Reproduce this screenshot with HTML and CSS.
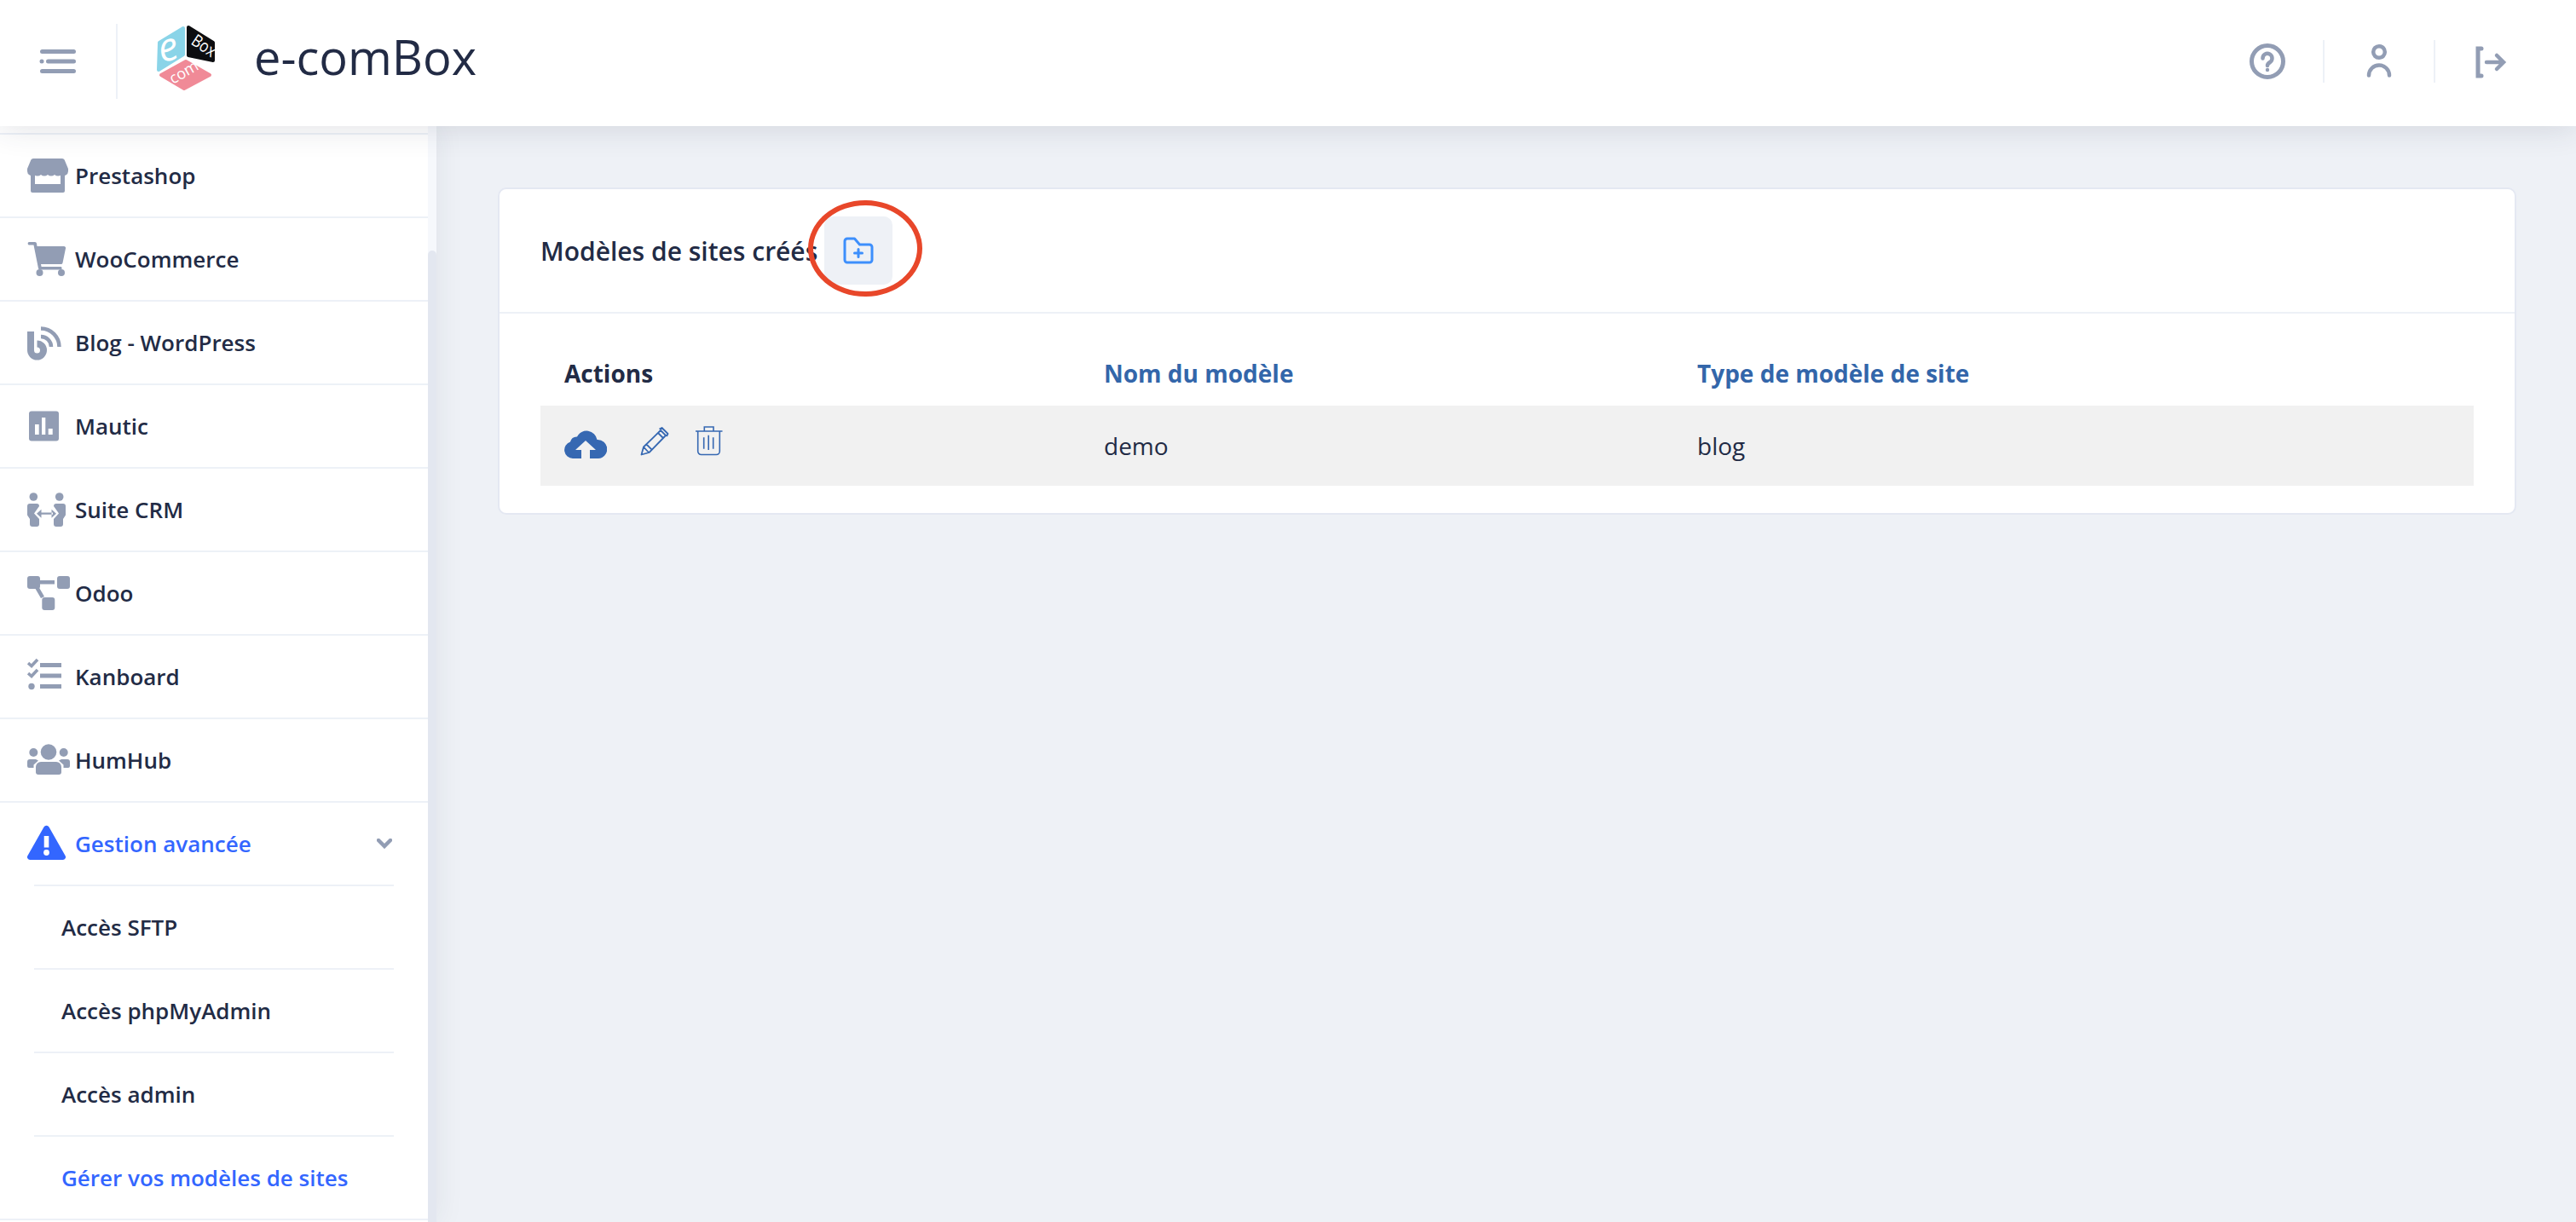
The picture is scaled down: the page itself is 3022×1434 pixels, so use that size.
FILE: index.html
```html
<!DOCTYPE html>
<html lang="fr">
<head>
    <meta charset="UTF-8">
    <meta name="viewport" content="width=device-width, initial-scale=1.0">
    <title>e-comBox</title>
    <link rel="stylesheet" href="styles.css">
</head>
<body>
    <header class="topbar">
        <div class="topbar-left">
            <button class="menu-toggle" aria-label="Menu">
                <svg width="44" height="30" viewBox="0 0 44 30"><path d="M3.5 3.5h37M10.500 15h30M3.500 26.500h37" class="line"/><circle cx="3" cy="15" r="2.500" class="dot"/></svg>
            </button>
            <div class="brand">
                <svg class="brand-logo" width="76" height="84" viewBox="0 0 76 84">
                    <path d="M35 7 7 24 6 56 35 38Z" fill="#8ad4e8" stroke="#8ad4e8" stroke-width="4" stroke-linejoin="round"/>
                    <path d="M41 6 70 24 70 45 41 39Z" fill="#0c0d10" stroke="#0c0d10" stroke-width="4" stroke-linejoin="round"/>
                    <path d="M38 46 66 62 36 78 9 62Z" fill="#f08a97" stroke="#f08a97" stroke-width="4" stroke-linejoin="round"/>
                    <text x="7" y="45" class="logo-e" transform="rotate(-14 18 36)">e</text>
                    <text x="43" y="25" class="logo-box" textLength="30" lengthAdjust="spacingAndGlyphs" transform="rotate(34 43 25)">Box</text>
                    <text x="23" y="73" class="logo-com" transform="rotate(-30 23 73)">com</text>
                </svg>
                <span class="brand-name">e-comBox</span>
            </div>
        </div>
        <div class="topbar-actions">
            <a class="action" href="#" aria-label="Aide">
                <svg width="42" height="42" viewBox="0 0 42 42"><circle cx="21" cy="21" r="18.500" class="line"/><path d="M15.500 17.500a5.500 5.500 0 1 1 8.500 4.500c-2 1.300-3 2-3 4" class="line thin"/><circle cx="21" cy="31" r="2.200" class="dot"/></svg>
            </a>
            <a class="action" href="#" aria-label="Profil">
                <svg width="42" height="42" viewBox="0 0 42 42"><circle cx="21" cy="10" r="6.800" class="line thin"/><path d="M9 37.500a12 12 0 0 1 24 0" class="line thin"/></svg>
            </a>
            <a class="action" href="#" aria-label="Sortir">
                <svg width="42" height="42" viewBox="0 0 42 42"><path d="M11 6H7v32h4" class="line"/><path d="M17 22h19M29 14l8 8-8 8" class="line thin"/></svg>
            </a>
        </div>
    </header>

    <div class="layout">
        <aside class="sidebar">
            <ul class="menu">
                <li class="menu-item">
                    <a class="menu-link" href="#">
                        <svg class="menu-icon" viewBox="0 0 50 50"><path d="M4 23h40v20a2 2 0 0 1-2 2H6a2 2 0 0 1-2-2Z"/><rect x="9" y="24" width="30" height="11" fill="#fff"/><path d="M7 5h34a3 3 0 0 1 2.600 1.600L48 17v3a5 5 0 0 1-8 4 6 6 0 0 1-8 0 6 6 0 0 1-8 0 6 6 0 0 1-8 0 6 6 0 0 1-8 0 5 5 0 0 1-8-4v-3L4.400 6.600A3 3 0 0 1 7 5Z"/></svg>
                        <span>Prestashop</span>
                    </a>
                </li>
                <li class="menu-item">
                    <a class="menu-link" href="#">
                        <svg class="menu-icon" viewBox="0 0 50 50"><path d="M2 5h7a2 2 0 0 1 2 1.500L11.500 10H43a2 2 0 0 1 2 2.500l-3.500 17a2 2 0 0 1-2 1.500H16l.6 3h23a2 2 0 0 1 0 3.500H15a2 2 0 0 1-2-1.600L7.500 8.500H2A1.800 1.800 0 0 1 2 5Z"/><circle cx="14.500" cy="41" r="4"/><circle cx="40" cy="41" r="4"/></svg>
                        <span>WooCommerce</span>
                    </a>
                </li>
                <li class="menu-item">
                    <a class="menu-link" href="#">
                        <svg class="menu-icon" viewBox="0 0 50 50"><path d="M4 12v22a7.500 7.500 0 1 0 7.500-7.500" fill="none" stroke="#929db4" stroke-width="8"/><path d="M16 8.500a21.500 21.500 0 0 1 21.500 21.500M16 18a12 12 0 0 1 12 12" fill="none" stroke="#929db4" stroke-width="4.500"/></svg>
                        <span>Blog - WordPress</span>
                    </a>
                </li>
                <li class="menu-item">
                    <a class="menu-link" href="#">
                        <svg class="menu-icon" viewBox="0 0 50 50"><rect x="2" y="7.500" width="35" height="35" rx="3"/><path d="M9 23h4.700v12H9zM17 15h4.300v20H17zM24.700 28h5v7h-5z" fill="#fff"/></svg>
                        <span>Mautic</span>
                    </a>
                </li>
                <li class="menu-item">
                    <a class="menu-link" href="#">
                        <svg class="menu-icon" viewBox="0 0 50 50"><circle cx="7.300" cy="10" r="4.800"/><circle cx="37.700" cy="10" r="4.800"/><path d="M3 18h8a3 3 0 0 1 3 3L8 29.500l6 6.500v6a3 3 0 0 1-3 3H6a3 3 0 0 1-3-3v-6l-2-3a3 3 0 0 1-1-2V21a3 3 0 0 1 3-3Z"/><path d="M42 18h-8a3 3 0 0 0-3 3l6 8.500-6 6.500v6a3 3 0 0 0 3 3h5a3 3 0 0 0 3-3v-6l2-3a3 3 0 0 0 1-2V21a3 3 0 0 0-3-3Z"/><path d="M15 28.600h15v2.200H15zM11 29.700l5.500-5v10zM34 29.700l-5.500-5v10z"/></svg>
                        <span>Suite CRM</span>
                    </a>
                </li>
                <li class="menu-item">
                    <a class="menu-link" href="#">
                        <svg class="menu-icon" viewBox="0 0 50 50"><rect x="0" y="5" width="15" height="15" rx="3"/><rect x="35" y="5" width="15" height="15" rx="3"/><rect x="17.300" y="30" width="15" height="15" rx="3"/><path d="M14 10h18v4.500H14zM9 19l4-2 7 12-4 2z"/></svg>
                        <span>Odoo</span>
                    </a>
                </li>
                <li class="menu-item">
                    <a class="menu-link" href="#">
                        <svg class="menu-icon" viewBox="0 0 50 50"><path d="M15 9h25v5H15zM15 21.500h25v5H15zM15 34h25v5H15z"/><path d="M1 9l4 3.500L12 5M1 21l4 3.500L12 17" fill="none" stroke="#929db4" stroke-width="3.600"/><circle cx="5" cy="36.500" r="3.700"/></svg>
                        <span>Kanboard</span>
                    </a>
                </li>
                <li class="menu-item">
                    <a class="menu-link" href="#">
                        <svg class="menu-icon" viewBox="0 0 50 50"><circle cx="25" cy="15.500" r="9.300"/><circle cx="7.300" cy="16" r="5"/><circle cx="42.700" cy="16" r="5"/><path d="M16 27h18a6 6 0 0 1 6 6v6a3 3 0 0 1-3 3H13a3 3 0 0 1-3-3v-6a6 6 0 0 1 6-6Z"/><path d="M3 24h7l3 1.500-5.500 5V34H2a2 2 0 0 1-2-2v-5a3 3 0 0 1 3-3ZM47 24h-7l-3 1.500 5.500 5V34H48a2 2 0 0 0 2-2v-5a3 3 0 0 0-3-3Z"/></svg>
                        <span>HumHub</span>
                    </a>
                </li>
                <li class="menu-item has-sub">
                    <a class="menu-link active" href="#">
                        <svg class="menu-icon" viewBox="0 0 50 50"><path d="M19.500 5.500a3.500 3.500 0 0 1 6 0L44.500 39a3.200 3.200 0 0 1-2.800 5H3.300A3.200 3.200 0 0 1 .5 39Z" fill="#3366ff"/><path d="M19.700 16h5.600v13.500h-5.600z" fill="#fff"/><circle cx="22.500" cy="35.500" r="3.400" fill="#fff"/></svg>
                        <span>Gestion avancée</span>
                        <svg class="menu-chevron" width="18" height="12" viewBox="0 0 18 12"><path d="M2 2l7 7 7-7" class="line thin"/></svg>
                    </a>
                    <ul class="submenu">
                        <li><a href="#">Accès SFTP</a></li>
                        <li><a href="#">Accès phpMyAdmin</a></li>
                        <li><a href="#">Accès admin</a></li>
                        <li><a class="active" href="#">Gérer vos modèles de sites</a></li>
                    </ul>
                </li>
            </ul>
            <div class="scrollbar"><div class="scrollbar-thumb"></div></div>
        </aside>

        <main class="content">
            <section class="card">
                <div class="card-header">
                    <h2>Modèles de sites créés</h2>
                    <div class="add-wrap">
                        <button class="add-btn" aria-label="Ajouter">
                            <svg width="36" height="32" viewBox="0 0 36 32"><path d="M2 5a3 3 0 0 1 3-3h8.500l6 7H31a3 3 0 0 1 3 3v15a3 3 0 0 1-3 3H5a3 3 0 0 1-3-3Z" fill="none" stroke="#3d8ffc" stroke-width="3" stroke-linejoin="round"/><path d="M18 14.500v9M13.500 19h9" fill="none" stroke="#3d8ffc" stroke-width="3" stroke-linecap="round"/></svg>
                        </button>
                        <span class="annotation"></span>
                    </div>
                </div>
                <div class="card-body">
                    <table class="sites">
                        <thead>
                            <tr>
                                <th class="col-actions">Actions</th>
                                <th class="col-name">Nom du modèle</th>
                                <th class="col-type">Type de modèle de site</th>
                            </tr>
                        </thead>
                        <tbody>
                            <tr>
                                <td class="cell-actions">
                                    <div class="row-actions">
                                        <svg class="cloud" width="50" height="33" viewBox="0 0 50 33"><path d="M10 33a10 10 0 0 1-3-19.500A8 8 0 0 1 15 7.500 12.500 12.500 0 0 1 38.500 11 10.500 10.500 0 0 1 40 33H30V23h7L25 12 13 23h7v10Z" fill="#3668b2"/></svg>
                                        <svg class="pencil" width="34" height="34" viewBox="0 0 34 34"><path d="M1.500 32.500l2.500-9L24 4l6 6-19.500 20Zm2.500-9l6.500 7M7 20l7 7M21 7l6 6M22.500 2.500l3-1.500 7 7-1.500 3" fill="none" stroke="#3668b2" stroke-width="1.800" stroke-linejoin="round"/></svg>
                                        <svg class="trash" width="32" height="35" viewBox="0 0 32 35"><path d="M0 6h31.500M2.700 6v23.500a4 4 0 0 0 4 4h17.600a4 4 0 0 0 4-4V6M10.300 6V1h10.700v5M9.700 13.300v13.400M15.200 10.700V28M20.700 13.300v13.400" fill="none" stroke="#3668b2" stroke-width="1.600"/></svg>
                                    </div>
                                </td>
                                <td>demo</td>
                                <td>blog</td>
                            </tr>
                        </tbody>
                    </table>
                </div>
            </section>
        </main>
    </div>
</body>
</html>
```

FILE: styles.css
```css
* {
    box-sizing: border-box;
}
html, body {
    height: 100%;
}
body {
    margin: 0;
    overflow: hidden;
    display: flex;
    flex-direction: column;
    font-family: 'Open Sans', sans-serif;
    font-size: 28px;
    color: #222b45;
    background-color: #eef1f6;
}
a {
    color: inherit;
    text-decoration: none;
}
button {
    border: none;
    padding: 0;
    background: none;
}
svg {
    display: block;
}
.line {
    fill: none;
    stroke: #929db4;
    stroke-width: 5;
    stroke-linecap: round;
}
.line.thin {
    stroke-width: 4.500;
}
.dot {
    fill: #929db4;
}

/* top bar */
.topbar {
    position: relative;
    z-index: 2;
    flex: none;
    height: 148px;
    display: flex;
    justify-content: space-between;
    align-items: center;
    padding-right: 37px;
    background-color: #fff;
    box-shadow: 0 0 36px rgba(44, 51, 73, 0.16);
}
.topbar-left {
    display: flex;
    align-items: center;
}
.menu-toggle {
    width: 138px;
    height: 88px;
    margin-top: -4px;
    padding-left: 46px;
    border-right: 2px solid #edf1f7;
}
.brand {
    display: flex;
    align-items: center;
    margin-left: 42px;
    margin-top: -12px;
}
.brand-logo {
    margin-right: 42px;
    overflow: visible;
}
.logo-e {
    font-style: italic;
    font-size: 46px;
    fill: #fff;
}
.logo-box {
    font-size: 20px;
    fill: #fff;
}
.logo-com {
    font-size: 18px;
    fill: #fff;
}
.brand-name {
    margin-top: -4px;
    font-size: 56px;
    line-height: 1;
}
.topbar-actions {
    display: flex;
    align-items: center;
    margin-top: -4px;
}
.action {
    width: 130px;
    height: 50px;
    display: flex;
    justify-content: center;
    align-items: center;
    border-left: 2px solid #edf1f7;
}
.action:first-child {
    border-left: none;
}

/* sidebar */
.layout {
    flex: 1;
    display: flex;
    min-height: 0;
}
.sidebar {
    position: relative;
    z-index: 1;
    flex: none;
    width: 512px;
    display: flex;
    background-color: #fff;
    box-shadow: 0 0 32px rgba(44, 51, 73, 0.08);
}
.menu {
    width: 502px;
    margin: 0;
    padding: 8px 0 0;
    list-style: none;
    font-size: 26px;
    font-weight: 600;
}
.menu-item {
    border-top: 2px solid #edf1f7;
}
.menu-item.has-sub {
    border-bottom: 2px solid #edf1f7;
}
.menu-link {
    height: 96px;
    display: flex;
    align-items: center;
    padding: 0 32px;
}
.menu-link.active {
    color: #3366ff;
}
.menu-icon {
    flex: none;
    width: 50px;
    height: 50px;
    margin-right: 6px;
    fill: #929db4;
}
.menu-chevron {
    margin-left: auto;
    margin-right: 10px;
}
.submenu {
    margin: 0;
    padding: 0;
    list-style: none;
}
.submenu li {
    margin: 0 40px;
    border-top: 2px solid #edf1f7;
}
.submenu a {
    height: 96px;
    display: flex;
    align-items: center;
    padding-left: 32px;
}
.submenu a.active {
    color: #3366ff;
}
.scrollbar {
    width: 10px;
    padding-top: 146px;
    background-color: #f6f8fc;
}
.scrollbar-thumb {
    height: 100%;
    border-radius: 6px 6px 0 0;
    background-color: #e3e7f0;
}

/* content */
.content {
    flex: 1;
    min-width: 0;
    padding: 72px 70px 72px 72px;
}
.card {
    border: 2px solid #e4e8f2;
    border-radius: 10px;
    background-color: #fff;
}
.card-header {
    height: 146px;
    display: flex;
    align-items: center;
    padding-left: 48px;
    border-bottom: 2px solid #edf1f7;
}
.card-header h2 {
    margin: 0;
    font-size: 30px;
    font-weight: 600;
}
.add-wrap {
    position: relative;
    margin-left: 8px;
}
.add-btn {
    width: 80px;
    height: 80px;
    display: flex;
    justify-content: center;
    align-items: center;
    border-radius: 10px;
    background-color: #eef1f6;
}
.annotation {
    position: absolute;
    left: -19px;
    top: -19px;
    width: 134px;
    height: 113px;
    border: 6px solid #e8472a;
    border-radius: 50%;
}
.card-body {
    padding: 0 48px 32px;
}
.sites {
    width: 100%;
    border-collapse: collapse;
    table-layout: fixed;
}
.sites th {
    height: 108px;
    padding: 32px 28px 0;
    text-align: left;
    font-weight: 700;
    color: #3366aa;
}
.sites th.col-actions {
    width: 633px;
    color: #222b45;
}
.sites th.col-name {
    width: 696px;
}
.sites td {
    height: 94px;
    padding: 0 28px;
    background-color: #f1f1f1;
}
.sites td.cell-actions {
    padding-top: 24px;
    vertical-align: top;
}
.row-actions {
    display: flex;
    align-items: flex-start;
}
.cloud {
    margin-top: 5px;
}
.pencil {
    margin-left: 39px;
    margin-top: 1px;
}
.trash {
    margin-left: 31px;
}
```
